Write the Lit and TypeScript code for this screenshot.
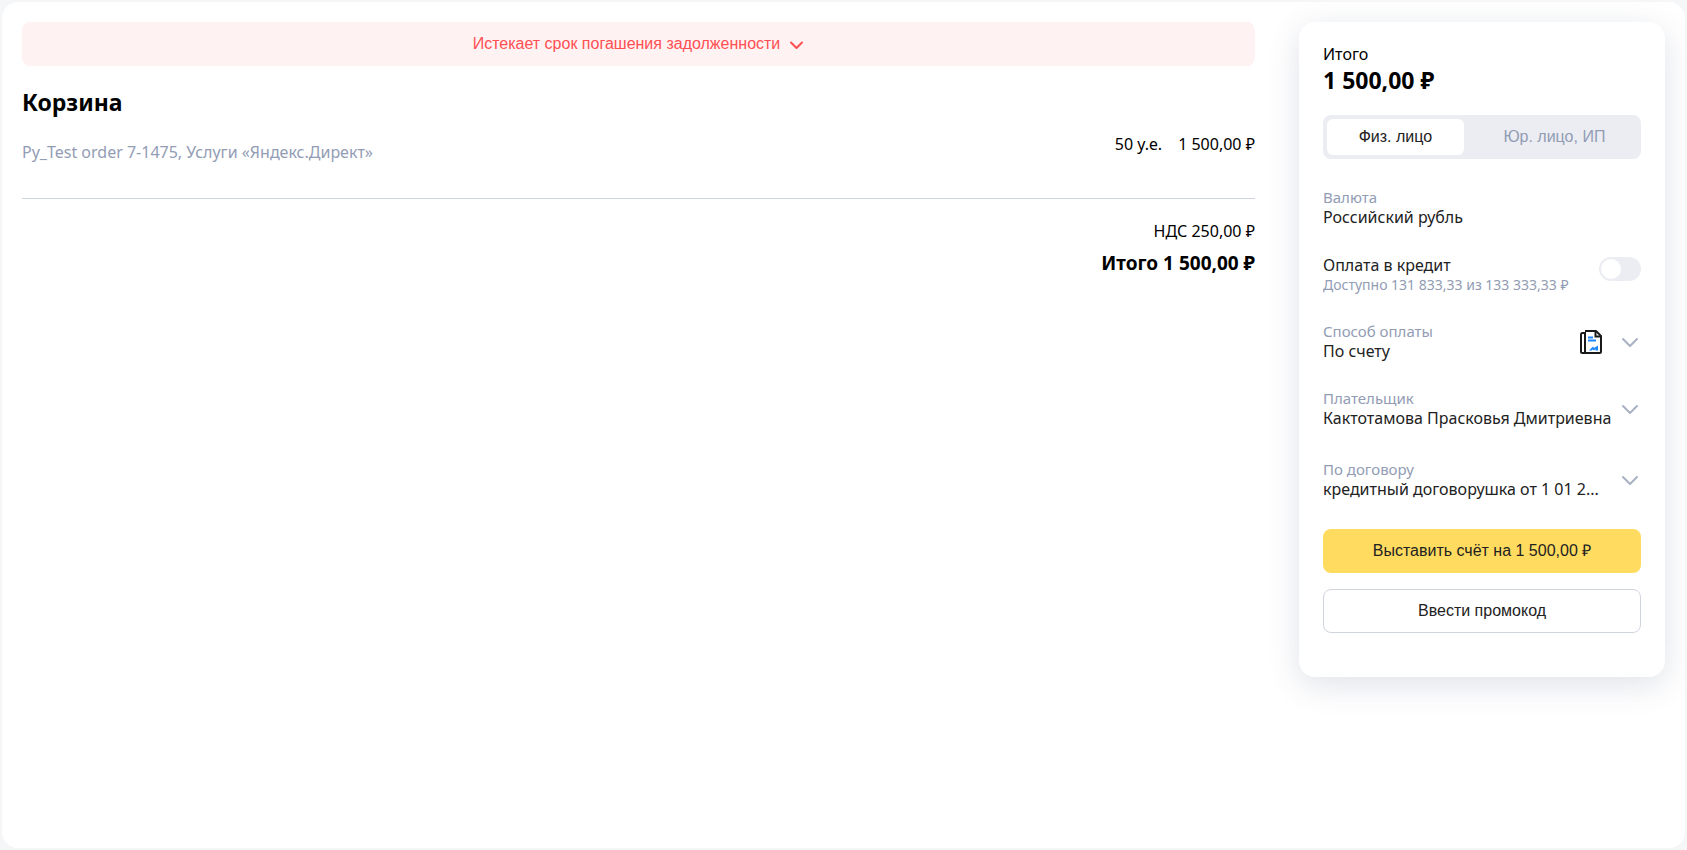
import { LitElement, html, css, svg } from "lit";
import { customElement, state } from "lit/decorators.js";

interface Field {
  id: string;
  label: string;
  value: string;
}

const chevron = (size: number, path: string) => html`
  <svg class="chevron" width=${size} height=${size} viewBox="0 0 ${size} ${size}" aria-hidden="true">
    ${svg`<path d=${path} fill="none" stroke="currentColor" stroke-width="2" stroke-linecap="round" stroke-linejoin="round"/>`}
  </svg>
`;

@customElement("app-root")
export class AppRoot extends LitElement {
  static styles = css`
    :host {
      display: block;
      box-sizing: border-box;
      min-height: 100vh;
      padding: 2px;
      background: #f5f6f8;
      color: #000;
      font: 16px/20px "Noto Sans", sans-serif;
    }
    * {
      box-sizing: border-box;
    }
    .page {
      display: flex;
      align-items: flex-start;
      gap: 44px;
      min-height: calc(100vh - 4px);
      padding: 20px;
      border-radius: 16px;
      background: #fff;
      overflow: hidden;
    }
    .cart {
      flex: 1;
      min-width: 0;
    }
    button {
      border: 0;
      margin: 0;
      cursor: pointer;
      font: 16px/20px "Liberation Sans", Arial, sans-serif;
    }
    .notice {
      display: flex;
      align-items: center;
      justify-content: center;
      gap: 8px;
      width: 100%;
      height: 44px;
      border-radius: 8px;
      background: #fff2f2;
      color: #ff4f52;
    }
    h1 {
      margin: 20px 0 16px;
      font-size: 23px;
      line-height: 32px;
      font-weight: 700;
    }
    .item {
      display: flex;
      justify-content: space-between;
      padding-bottom: 36px;
      border-bottom: 1px solid #d0d4de;
    }
    .name {
      padding-top: 8px;
      color: #929cb4;
    }
    .cost {
      display: flex;
      gap: 16px;
    }
    .totals {
      padding-top: 22px;
      text-align: right;
    }
    .totals p {
      margin: 0;
    }
    .totals .sum {
      margin-top: 8px;
      font-size: 19px;
      line-height: 28px;
      font-weight: 700;
    }
    .card {
      flex: 0 0 366px;
      padding: 22px 24px 44px;
      border-radius: 16px;
      background: #fff;
      box-shadow: 0 8px 32px rgba(60, 72, 110, 0.16);
    }
    .card p {
      margin: 0;
    }
    .card .price {
      font-size: 23px;
      line-height: 32px;
      font-weight: 700;
    }
    .tabs {
      display: flex;
      gap: 8px;
      margin-top: 19px;
      padding: 4px;
      border-radius: 8px;
      background: #ebedf2;
    }
    .tab {
      flex: 1 1 auto;
      height: 36px;
      padding: 0;
      border-radius: 6px;
      background: none;
      color: #929cb4;
    }
    .tab.active {
      background: #fff;
      color: #222;
    }
    .rows {
      display: grid;
      gap: 28px;
      margin: 29px 0 30px;
      color: #222;
    }
    .label {
      display: block;
      color: #929cb4;
      font-size: 15px;
      line-height: 19px;
    }
    .credit {
      display: flex;
      justify-content: space-between;
      align-items: flex-start;
    }
    .credit .label {
      font-size: 14px;
    }
    .switch {
      appearance: none;
      width: 42px;
      height: 24px;
      margin: 2px 0 0;
      padding: 2px;
      border-radius: 12px;
      background: #ebedf2;
      cursor: pointer;
    }
    .switch::before {
      content: "";
      display: block;
      width: 20px;
      height: 20px;
      border-radius: 50%;
      background: #fff;
    }
    .switch:checked {
      background: #ffdb60;
    }
    .switch:checked::before {
      margin-left: auto;
    }
    .field {
      display: grid;
      grid-template-columns: 1fr auto 24px;
      align-items: center;
      column-gap: 14px;
    }
    .field .label {
      grid-area: 1 / 1;
    }
    .field select {
      grid-area: 2 / 1 / 3 / 4;
      appearance: none;
      width: 100%;
      height: 20px;
      margin: 0;
      padding: 0 24px 0 0;
      border: 0;
      background: none;
      color: inherit;
      font: inherit;
      cursor: pointer;
    }
    .field .doc {
      grid-area: 1 / 2 / 3 / 3;
      pointer-events: none;
    }
    .field .chevron {
      grid-area: 1 / 3 / 3 / 4;
      color: #a9b1c4;
      pointer-events: none;
    }
    .contract {
      margin-top: 4px;
    }
    .action {
      display: block;
      width: 100%;
      height: 44px;
      border-radius: 8px;
      color: #222;
    }
    .pay {
      background: #ffdb60;
    }
    .promo {
      margin-top: 16px;
      border: 1px solid #d0d4de;
      background: #fff;
    }
  `;

  @state() private person = 0;

  private tabs = ["Физ. лицо", "Юр. лицо, ИП"];

  private renderField(f: Field, icon: unknown = "", cls = "") {
    return html`
      <div class="field ${cls}">
        <label class="label" for=${f.id}>${f.label}</label>
        <select id=${f.id}>
          <option>${f.value}</option>
        </select>
        ${icon}
        ${chevron(24, "M6 9 L13 16 L20 9")}
      </div>
    `;
  }

  private docIcon = html`
    <svg class="doc" width="24" height="24" viewBox="0 0 24 24" aria-hidden="true">
      <path d="M6 1H17L22 6V21.5Q22 23 20.5 23H3.500Q2 23 2 21.5V4.500Q2 3 3.500 3H6" fill="none" stroke="#1a1a1a" stroke-width="2" stroke-linejoin="round" />
      <path d="M6 2V23M16.500 1.500V6.500H21.500" fill="none" stroke="#1a1a1a" stroke-width="2" />
      <path d="M9 6.500h5v2H9zM9 9.500h8v2H9z" fill="#1c86ff" />
      <path d="M10 20.500L14 16.500L15 18L19 15.500V20.500H16.500V19L15 20.500L13.800 19.500L12.500 20.500Z" fill="#1c86ff" />
    </svg>
  `;

  render() {
    return html`
      <main class="page">
        <section class="cart">
          <button class="notice" type="button">
            Истекает срок погашения задолженности
            ${chevron(16, "M3 6.500 L8.500 12 L14 6.500")}
          </button>
          <h1>Корзина</h1>
          <div class="item">
            <span class="name">Py_Test order 7-1475, Услуги «Яндекс.Директ»</span>
            <span class="cost"><span>50 у.е.</span><span>1 500,00 ₽</span></span>
          </div>
          <div class="totals">
            <p>НДС 250,00 ₽</p>
            <p class="sum">Итого 1 500,00 ₽</p>
          </div>
        </section>
        <aside class="card">
          <p>Итого</p>
          <p class="price">1 500,00 ₽</p>
          <div class="tabs" role="tablist">
            ${this.tabs.map(
              (t, i) => html`<button
                type="button"
                role="tab"
                class="tab ${i === this.person ? "active" : ""}"
                aria-selected=${i === this.person}
                @click=${() => (this.person = i)}
              >${t}</button>`
            )}
          </div>
          <div class="rows">
            <div>
              <span class="label">Валюта</span>
              <span>Российский рубль</span>
            </div>
            <div class="credit">
              <label for="credit">
                Оплата в кредит
                <span class="label">Доступно 131 833,33 из 133 333,33 ₽</span>
              </label>
              <input class="switch" id="credit" type="checkbox" role="switch" />
            </div>
            ${this.renderField({ id: "method", label: "Способ оплаты", value: "По счету" }, this.docIcon)}
            ${this.renderField({ id: "payer", label: "Плательщик", value: "Кактотамова Прасковья Дмитриевна" })}
            ${this.renderField({ id: "contract", label: "По договору", value: "кредитный договорушка от 1 01 2..." }, "", "contract")}
          </div>
          <button class="action pay" type="button">Выставить счёт на 1 500,00 ₽</button>
          <button class="action promo" type="button">Ввести промокод</button>
        </aside>
      </main>
    `;
  }
}
